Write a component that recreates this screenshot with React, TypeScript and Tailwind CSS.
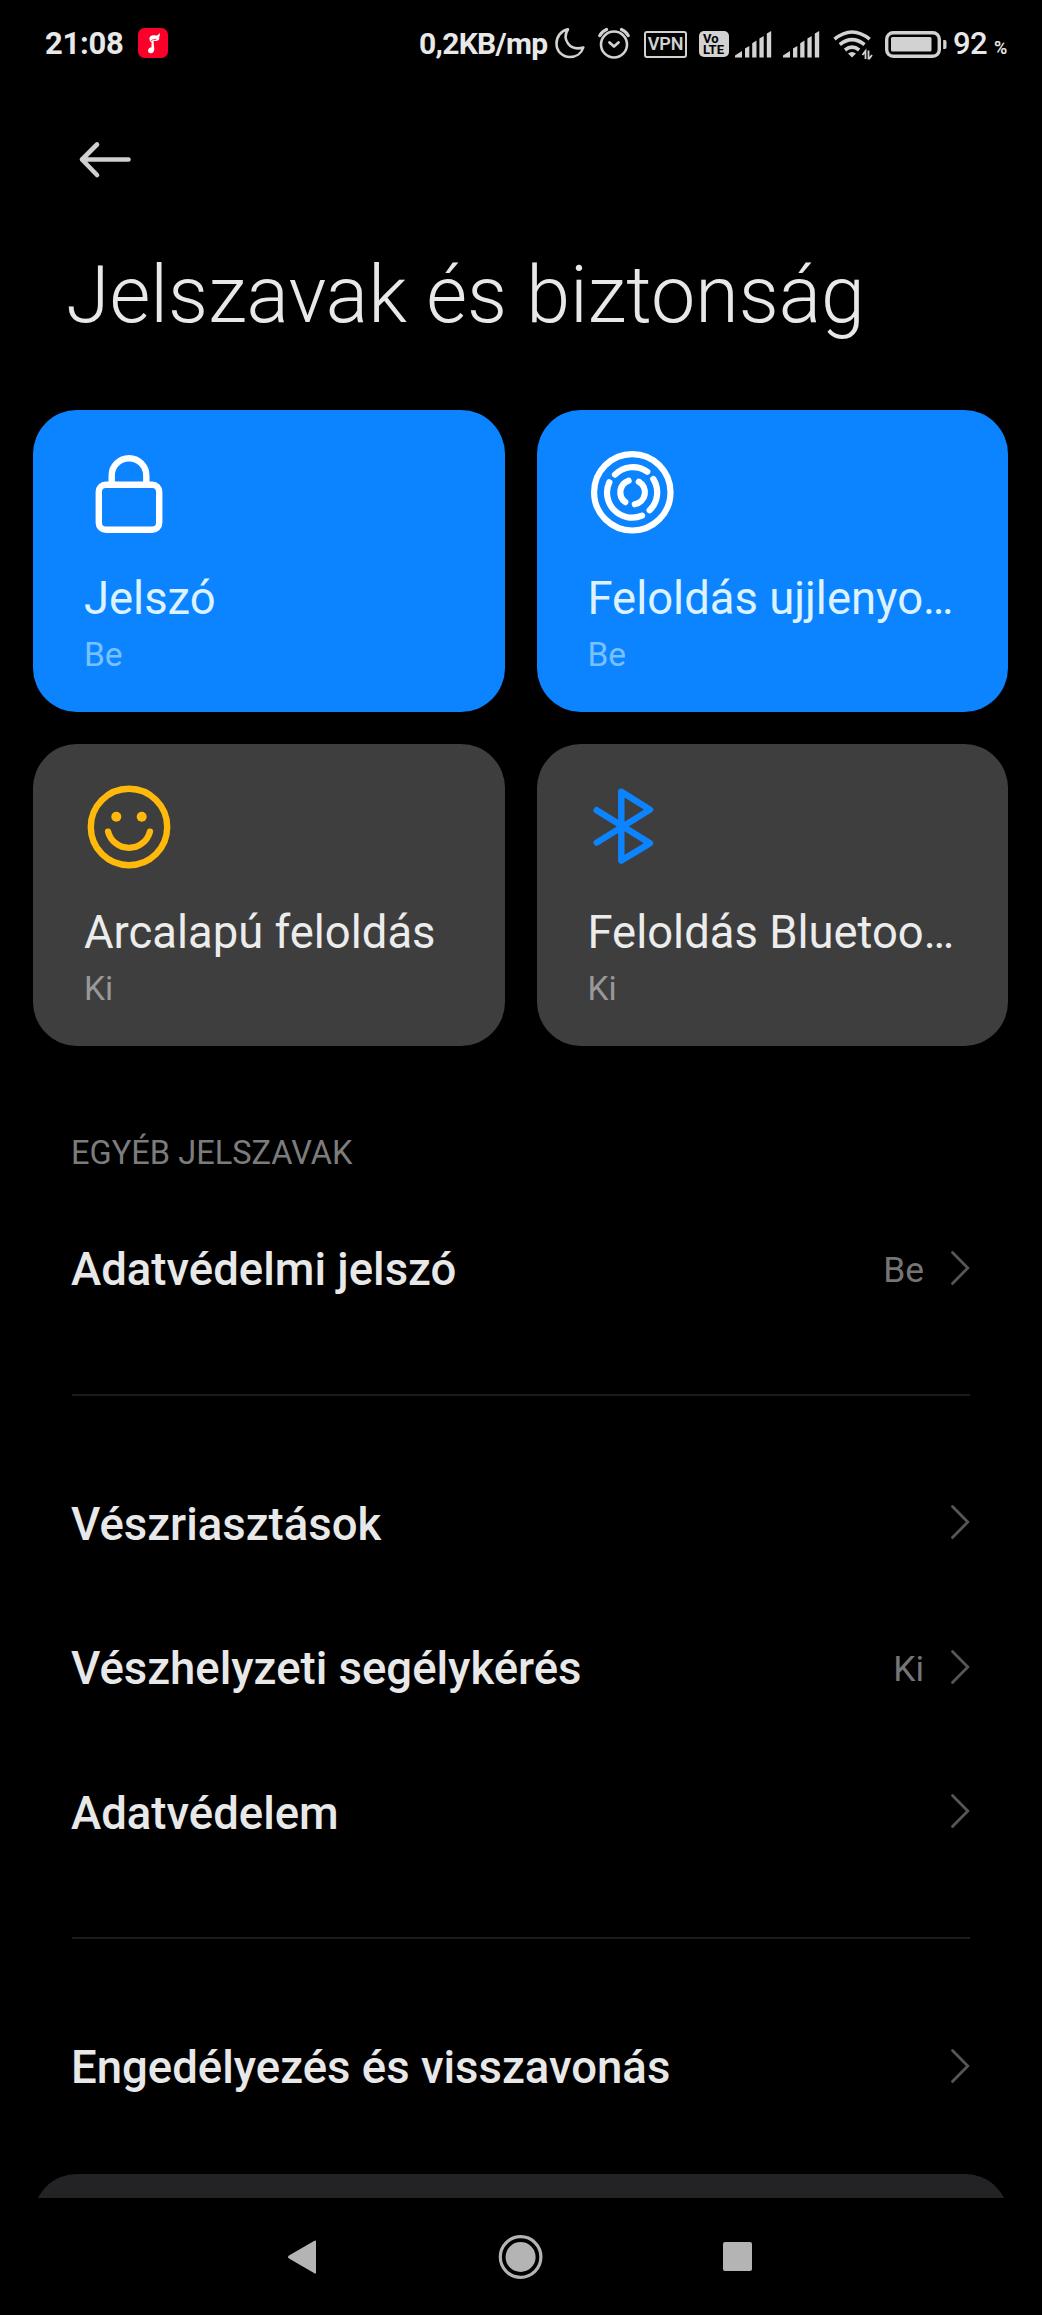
import type { ReactNode } from "react";

function SignalIcon() {
  return (
    <svg className="h-[27px] w-[37px]" viewBox="0 0 37 27" fill="#d2d2d2">
      <path d="M0 26.5V24.5L7 20V26.5Z" />
      <path d="M10 26.5V17.5L14.3 15V26.5Z" />
      <path d="M17.2 26.5V12.3L21.5 9.5V26.5Z" />
      <path d="M24.4 26.5V7.5L28.7 5V26.5Z" />
      <path d="M31.8 26.5V2.5L36.2 0V26.5Z" />
    </svg>
  );
}

function StatusBar() {
  return (
    <div className="flex h-[88px] items-center pl-[45px] text-[#e8e8e8]">
      <div className="w-[93px] text-[31px] leading-[36px] font-bold tracking-[-0.3px]">21:08</div>
      <svg className="relative -top-px h-[30px] w-[30px]" viewBox="0 0 30 30">
        <rect width="30" height="30" rx="6.5" fill="#fb0029" />
        <path d="M11.5 11.5C11 8 14 6.5 17.5 7.4C20 7.8 20.8 6.2 21.8 4.8C22 8 21.3 9.5 20.3 10.5C21 10.5 21.300 10 21.600 9.600C21 13.500 18 13.200 15.600 13C15.500 14.800 15.900 17 16.200 19.500C16.600 23.500 15 25.300 12.800 25.300C10.500 25.300 9.500 23.500 10.200 21.600C10.800 20 12.200 19.400 13.400 19.600L13.600 14.400C12.600 14 11.800 13 11.500 11.500Z" fill="#fff" />
        <path d="M13 13.200C14.200 11.200 16.500 11.800 18.500 11.200" stroke="#fb0029" strokeWidth="0.8" fill="none" />
      </svg>
      <div className="ml-[251px] w-[136px] text-[30px] leading-[36px] font-bold tracking-[-0.7px] whitespace-nowrap">0,2KB/mp</div>
      <svg className="relative -top-px h-8 w-[30px]" viewBox="0 0 30 32" fill="none" stroke="#d2d2d2" strokeWidth="2.6" strokeLinejoin="round">
        <path d="M13 2.3C5.5 4 1.5 10 1.5 16.4C1.5 24.4 7.4 30 14.8 30C21 30 26.5 26.5 28.3 20.5C21.5 22.5 16 20.5 13 16.5C10 12.4 10 7 13 2.3Z" />
      </svg>
      <svg className="relative -top-px ml-[13px] h-8 w-8" viewBox="0 0 32 32" fill="none" stroke="#d2d2d2" strokeWidth="2.6" strokeLinecap="round" strokeLinejoin="round">
        <circle cx="16" cy="17.5" r="13" />
        <path d="M11.5 15.5L16 19.5L20.5 15.5" strokeWidth="2.8" />
        <path d="M1.8 8.5Q4.2 4.2 8.5 2.5M30.2 8.5Q27.8 4.2 23.5 2.5" strokeWidth="3.2" />
      </svg>
      <div className="ml-[14px] flex h-[27px] w-[43px] items-center justify-center rounded-[3px] border-2 border-[#d2d2d2] text-[18px] leading-none font-semibold tracking-[-0.2px] text-[#d2d2d2]">VPN</div>
      <div className="ml-3 flex h-[26px] w-[30px] flex-col justify-center rounded-[5px] bg-[#d2d2d2] pl-1 text-[13px] leading-[11.5px] font-bold text-black">
        <span>Vo</span>
        <span>LTE</span>
      </div>
      <div className="ml-[6px] flex gap-[11px]">
        <SignalIcon />
        <SignalIcon />
      </div>
      <svg className="relative top-px ml-[13px] h-[31px] w-10" viewBox="0 0 40 31" fill="none" stroke="#d2d2d2" strokeWidth="3.6">
        <path d="M1.5 9.2Q19 -5.2 36.7 9.2" />
        <path d="M6.8 14.6Q19 4.6 31.5 14.6" />
        <path d="M12 20Q19 14.4 26.2 20" />
        <path d="M15 23.5Q19 20.5 23 23.5L19 27.4Z" fill="#d2d2d2" stroke="none" />
        <path d="M32.5 29V21L29.5 25M35.5 20.5V29.5M36 29L39 25" strokeWidth="1.8" />
      </svg>
      <svg className="ml-[12px] h-[27px] w-[62px]" viewBox="0 0 62 27">
        <rect x="1.7" y="1.7" width="52.6" height="23.6" rx="6.5" fill="none" stroke="#d2d2d2" strokeWidth="3.4" />
        <rect x="6" y="6" width="40.5" height="14.5" rx="1.5" fill="#d2d2d2" />
        <path d="M58.2 9H60Q61.5 9 61.5 11V16Q61.5 18 60 18H58.2Z" fill="#d2d2d2" />
      </svg>
      <div className="ml-[6px] w-[41px] text-[31px] leading-[36px] font-medium tracking-[-0.5px]">92</div>
      <div className="mt-2 text-[18px] leading-5 font-semibold">%</div>
    </div>
  );
}

function LockIcon() {
  return (
    <svg className="h-24 w-24" viewBox="-48 -48 96 96" fill="none" stroke="#fff" strokeWidth="6.4">
      <rect x="-30.2" y="-8.2" width="60.4" height="45" rx="7" />
      <path d="M-17.3 -8V-17.5A17.3 17.3 0 0 1 17.3 -17.5V-8" />
    </svg>
  );
}

function FingerprintIcon() {
  return (
    <svg className="h-24 w-24" viewBox="-47.3 -47.3 96 96" fill="none" stroke="#fff" strokeWidth="6.2" strokeLinecap="round">
      <circle r="38.2" />
      <path d="M-17.3 -17.7A25 25 0 0 1 15 -20.5" />
      <path d="M21 -13.3A25 25 0 0 1 17.3 18" />
      <path d="M-23 -10A25 25 0 0 0 9.7 23.3" />
      <path d="M-3.7 -11.6A12.2 12.2 0 0 0 -7 9.8" />
      <path d="M6.5 -10.6A12.2 12.2 0 0 1 2.5 12" />
    </svg>
  );
}

function FaceIcon() {
  return (
    <svg className="h-24 w-24" viewBox="-48 -48 96 96" fill="none" stroke="#ffb90a" strokeWidth="6.4" strokeLinecap="round">
      <circle r="38.2" />
      <path d="M-20.9 4.7A21.6 21.6 0 0 0 20.9 4.7" />
      <circle cx="-12.7" cy="-10.3" r="5" fill="#ffb90a" stroke="none" />
      <circle cx="12.7" cy="-10.3" r="5" fill="#ffb90a" stroke="none" />
    </svg>
  );
}

function BluetoothIcon() {
  return (
    <svg className="h-24 w-24" viewBox="-48 -48 96 96" fill="none" stroke="#0d84ff" strokeWidth="6.4" strokeLinecap="round" strokeLinejoin="round">
      <path d="M-36.3 -16.8L17 16.2L-11.7 33.5V-35.3L17 -17.4L-36.3 15.6" />
    </svg>
  );
}

type CardProps = {
  icon: ReactNode;
  title: string;
  status: string;
  active?: boolean;
};

function Card({ icon, title, status, active }: CardProps) {
  return (
    <div className={`h-[302px] rounded-[44px] pt-[35px] ${active ? "bg-[#0d84ff]" : "bg-[#3e3e3e]"}`}>
      <div className="pl-12">{icon}</div>
      <div className={`mt-7 pl-[51px] text-[45.4px] leading-[60px] whitespace-nowrap ${active ? "text-[#dcf3ff]" : "text-[#ececec]"}`}>{title}</div>
      <div className={`mt-[6px] pl-[51px] text-[33.5px] leading-10 ${active ? "text-[#77c1ff]" : "text-[#989898]"}`}>{status}</div>
    </div>
  );
}

function Row({ title, value }: { title: string; value?: string }) {
  return (
    <div className="flex h-[144.5px] items-center justify-between pr-[72px] pl-[71px]">
      <div className="text-[45.5px] leading-[60px] font-medium text-[#e8e8e8]">{title}</div>
      <div className="flex items-center gap-[26px]">
        <span className="mb-px text-[35.4px] leading-10 text-[#757575]">{value}</span>
        <svg className="mb-[5px] h-9 w-5" viewBox="0 0 20 36" fill="none" stroke="#565656" strokeWidth="2.8" strokeLinecap="round">
          <path d="M2.5 2.5L17.8 18L2.5 33.5" />
        </svg>
      </div>
    </div>
  );
}

function Divider() {
  return <div className="mx-[72px] mt-[51px] mb-[57px] h-[2px] bg-[#1b1b1b]" />;
}

function NavBar() {
  return (
    <div className="flex h-[117px] items-center bg-black pl-[287px]">
      <svg className="h-9 w-[30px]" viewBox="0 0 30 36" fill="#b4b4b4">
        <path d="M29 2.5V33.5Q29 35.5 27 34L2 19.5Q0 18 2 16.5L27 2Q29 .8 29 2.5Z" />
      </svg>
      <svg className="ml-[181px] h-[46px] w-[46px]" viewBox="0 0 46 46">
        <circle cx="22.6" cy="23" r="20.3" fill="none" stroke="#b4b4b4" strokeWidth="3.2" />
        <circle cx="22.6" cy="23" r="15" fill="#b4b4b4" />
      </svg>
      <div className="ml-[179px] h-[29px] w-[29px] rounded-[2px] bg-[#b4b4b4]" />
    </div>
  );
}

export default function App() {
  return (
    <div className="flex h-[2315px] w-[1042px] flex-col overflow-hidden bg-black font-[Roboto,sans-serif]">
      <StatusBar />
      <div className="h-[159px] pt-[52px] pl-[78px]">
        <svg className="h-10 w-[56px]" viewBox="0 0 56 40" fill="none" stroke="#d0d0d0" strokeWidth="4.6" strokeLinecap="round" strokeLinejoin="round">
          <path d="M50.5 19.5H4L19 4.5M4 19.5L19 35" />
        </svg>
      </div>
      <h1 className="h-[163px] pl-[66px] text-[79px] leading-[96px] font-light text-[#e8e8e8]">Jelszavak és biztonság</h1>
      <div className="grid grid-cols-2 gap-8 pr-[34px] pl-[33px]">
        <Card icon={<LockIcon />} title="Jelszó" status="Be" active />
        <Card icon={<FingerprintIcon />} title="Feloldás ujjlenyo…" status="Be" active />
        <Card icon={<FaceIcon />} title="Arcalapú feloldás" status="Ki" />
        <Card icon={<BluetoothIcon />} title="Feloldás Bluetoo…" status="Ki" />
      </div>
      <div className="mt-[87px] mb-[25px] pl-[71px] text-[32.6px] leading-10 text-[#7c7c7c]">EGYÉB JELSZAVAK</div>
      <Row title="Adatvédelmi jelszó" value="Be" />
      <Divider />
      <Row title="Vészriasztások" />
      <Row title="Vészhelyzeti segélykérés" value="Ki" />
      <Row title="Adatvédelem" />
      <Divider />
      <Row title="Engedélyezés és visszavonás" />
      <div className="mx-[33px] mt-auto h-6 shrink-0 overflow-hidden">
        <div className="h-[120px] rounded-[44px] bg-[#232325]" />
      </div>
      <NavBar />
    </div>
  );
}
